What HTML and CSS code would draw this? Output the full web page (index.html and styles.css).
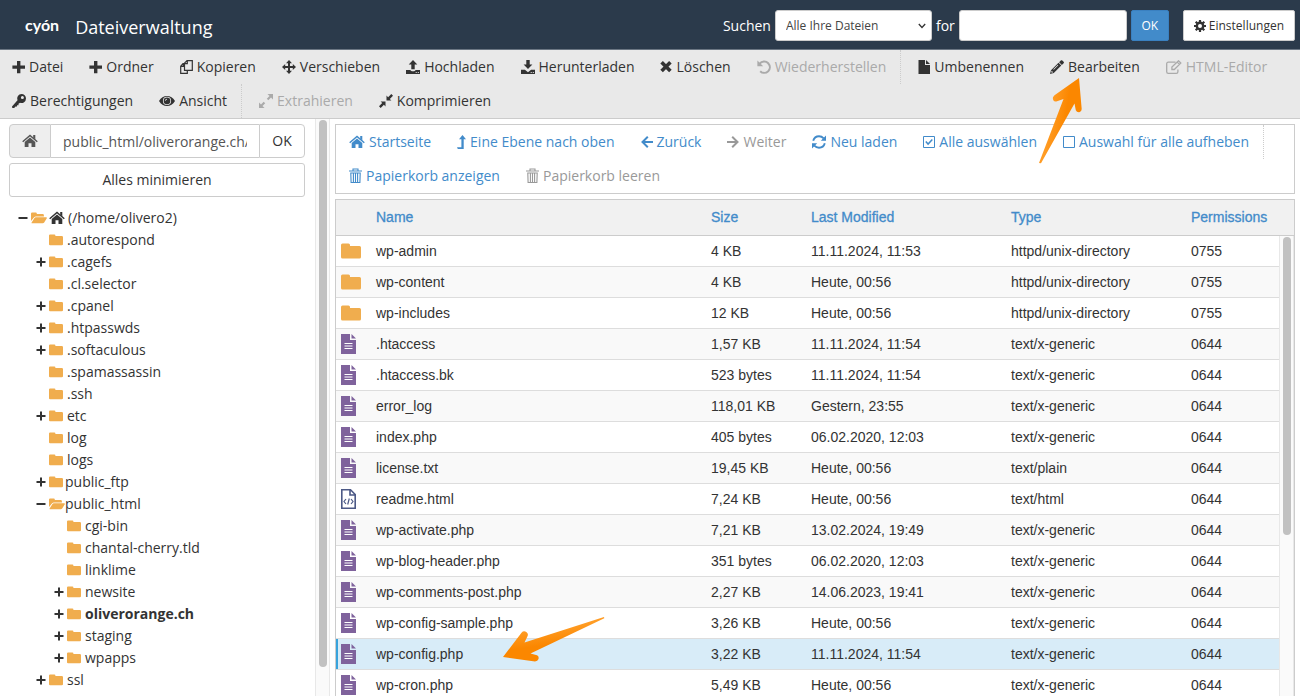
FILE: index.html
```html
<!DOCTYPE html>
<html lang="de">
<head>
<meta charset="utf-8">
<title>Dateiverwaltung</title>
<link rel="stylesheet" href="styles.css">
</head>
<body>
<svg class="sprite" aria-hidden="true">
  <symbol id="plus" viewBox="0 0 13 14"><path d="M5 1h3.400v4.400h4.600v3.300h-4.600v4.600h-3.400v-4.600h-4.600v-3.300h4.600z"/></symbol>
  <symbol id="copy" viewBox="0 0 13 14"><path fill="none" stroke="currentColor" stroke-width="1.200" d="M4.500 3.200L7 .7h5.300v9.600H4.500zM7.300 .7v2.900H4.500M4.300 3.700H3L.7 6.200v7.100h6.600v-3M3.300 3.700v2.700H.7"/></symbol>
  <symbol id="move" viewBox="0 0 14 14"><path d="M7 0l3 3.200H8v2.800h2.800V4L14 7l-3.200 3V8H8v2.800h2L7 14l-3-3.200h2V8H3.200v2L0 7l3.200-3v2H6V3.200H4z"/></symbol>
  <symbol id="upload" viewBox="0 0 14 14"><path d="M7 0l4.300 4.600H8.700v4.600H5.300V4.600H2.700zM0 10h4.300c.5 1 1.300 1.300 2.700 1.300S9.200 11 9.700 10H14v4H0z"/><path class="knock" d="M9.700 12h1v1h-1zM11.800 12h1v1h-1z"/></symbol>
  <symbol id="download" viewBox="0 0 14 14"><path d="M5.300 0h3.400v4.500h2.700L7 9 2.600 4.500h2.700zM0 9.800h3.900L7 12.200l3.100-2.400H14V14H0z"/><path class="knock" d="M9.700 12h1v1h-1zM11.800 12h1v1h-1z"/></symbol>
  <symbol id="cross" viewBox="0 0 12 14"><path fill="none" stroke="currentColor" stroke-width="3.600" d="M1.600 2.200l8.800 8.800M10.400 2.200L1.600 11"/></symbol>
  <symbol id="undo" viewBox="0 0 14 14"><path fill="none" stroke="currentColor" stroke-width="2" d="M2.400 3.800C5 .8 9 .8 11.200 3.200c2.200 2.500 2.200 5.800 0 8-2.200 2.100-5.700 2.200-8 0"/><path d="M.4 .5v5.800h5.800z"/></symbol>
  <symbol id="file" viewBox="0 0 12 14"><path d="M.5 0H7v4.900h5V14H.5zM8 0l4 4H8z"/></symbol>
  <symbol id="pencil" viewBox="0 0 14 14"><path d="M9.100 2.200l2.800 2.800 1.700-1.700c.5-.5.500-1 0-1.500L12.300.5c-.5-.5-1-.5-1.500 0zM8.500 2.800L1 10.200 0 14l3.800-1 7.500-7.400z"/><path class="knock" d="M1.700 10.800l1.500 1.500-1.300.4-.7-.7zM3.300 9.200l4.500-4.500.5.500-4.500 4.500z"/></symbol>
  <symbol id="edit" viewBox="0 0 16 14"><path fill="none" stroke="currentColor" stroke-width="1.300" d="M9.500 2.200H2.300Q.7 2.200.7 3.800v7.900q0 1.600 1.600 1.600h8q1.600 0 1.600-1.600V9.400M5.900 9.500V7.100L12.500.8l2.300 2.300-6.500 6.400zM11.200 2.100l2.300 2.300"/></symbol>
  <symbol id="key" viewBox="0 0 14 14"><path fill-rule="evenodd" d="M9.500 0A4.500 4.500 0 0 1 14 4.500 4.500 4.500 0 0 1 8 8.700L6.500 9.800v1.400H5v1.400H3.500L2.200 14H.3L0 12.500l5.500-6.300A4.500 4.500 0 0 1 9.500 0zm.9 2a1.500 1.500 0 1 0 0 3 1.500 1.500 0 0 0 0-3z"/></symbol>
  <symbol id="eye" viewBox="0 0 16 14"><path fill-rule="evenodd" d="M0 7c2-3.300 4.700-5 8-5s6 1.700 8 5c-2 3.300-4.700 5-8 5S2 10.300 0 7zm8-4.200a4.100 4.100 0 1 0 0 8.200 4.100 4.100 0 0 0 0-8.200z"/><circle cx="8" cy="6.900" r="3.300"/><path class="knock" d="M6 6.700Q6.200 5 8 4.800v.8Q6.900 5.800 6.800 6.700z"/></symbol>
  <symbol id="expand" viewBox="0 0 14 14"><path d="M8.500 0H14v5.500l-2-2-2.700 2.700-1.500-1.500L10.500 2zM0 8.500l2 2 2.700-2.700 1.500 1.500L3.500 12l2 2H0z"/></symbol>
  <symbol id="compress" viewBox="0 0 14 14"><path d="M7.500 1.600l1.600 1.600L12.300 0 14 1.700l-3.200 3.200 1.600 1.600H7.500zM1.600 7.500h4.900v4.900l-1.600-1.600L1.700 14 0 12.300l3.200-3.200z"/></symbol>
  <symbol id="gear" viewBox="0 0 12 12"><circle cx="6" cy="6" r="3.200" fill="none" stroke="currentColor" stroke-width="2.400"/><path fill="none" stroke="currentColor" stroke-width="2.200" d="M6 0v2.500M6 9.500V12M0 6h2.500M9.500 6H12M1.700 1.700l1.800 1.800M8.500 8.500l1.800 1.800M10.300 1.700L8.500 3.500M3.500 8.500l-1.800 1.800"/></symbol>
  <symbol id="home" viewBox="0 0 16 14"><path d="M8 3.500l5.300 4.600V13H9.500V9.200h-3V13H2.700V8.100z"/><path fill="none" stroke="currentColor" stroke-width="1.500" d="M.7 7.700L8 1.400l7.300 6.300"/><path d="M11.200 1h2.100v4.500l-2.100-1.800z"/></symbol>
  <symbol id="levelup" viewBox="0 0 9 14"><path d="M5.500 0L9 4.300H6.700V14H.8L0 12.200h4.400V4.300H2z"/></symbol>
  <symbol id="left" viewBox="0 0 12 14"><path fill="none" stroke="currentColor" stroke-width="2" d="M6.800 1.800L1.500 7l5.300 5.200M1.500 7H12"/></symbol>
  <symbol id="right" viewBox="0 0 12 14"><path fill="none" stroke="currentColor" stroke-width="2" d="M5.200 1.800L10.500 7l-5.300 5.200M10.500 7H0"/></symbol>
  <symbol id="refresh" viewBox="0 0 14 14"><path fill="none" stroke="currentColor" stroke-width="1.900" d="M1.200 5.800C2 3 4.200 1.300 7 1.300c1.900 0 3.300.6 4.700 2M12.800 8.200c-.8 2.800-3 4.500-5.800 4.500-1.900 0-3.300-.6-4.700-2"/><path d="M14 .5v5.200H8.800zM0 13.500V8.300h5.200z"/></symbol>
  <symbol id="checked" viewBox="0 0 12 14"><path fill="none" stroke="currentColor" stroke-width="1" d="M.5 1.500h11v11H.5z"/><path fill="none" stroke="currentColor" stroke-width="1.500" d="M2.800 6.600l2.300 2.500 4.200-4.500"/></symbol>
  <symbol id="square" viewBox="0 0 12 14"><path fill="none" stroke="currentColor" stroke-width="1" d="M.5 1.500h11v11H.5z"/></symbol>
  <symbol id="trash" viewBox="0 0 13 16"><path fill="none" stroke="currentColor" stroke-width="1.100" d="M0 3h13M4 3V1h5v2M1.800 5h9.400l-.3 9.500H2.100zM4.400 5v9M6.500 5v9M8.600 5v9"/></symbol>
  <symbol id="folder" viewBox="0 0 14 12"><path d="M0 1.600Q0 .5 1.100.5h4.300q1 0 1 1v.6h6.400q1.200 0 1.200 1.200v6.900q0 1.100-1.200 1.100H1.100Q0 11.300 0 10.200z"/></symbol>
  <symbol id="folder-open" viewBox="0 0 16 12"><path d="M0 9V1.600Q0 .5 1.100.5h3.700q1 0 1 1v.6h5.900q1.200 0 1.200 1.200v1.300H4.700Q3.300 4.700 2.500 5.900z"/><path d="M.5 10.800l2.800-4.500q.6-1 1.600-1H15q1.300 0 .8 1l-2.600 4.200q-.5.800-1.500.8H1.100q-.8 0-.6-.5z"/></symbol>
  <symbol id="t-plus" viewBox="0 0 10 12"><path d="M4 1.500h2V5h3.500v2H6v3.500H4V7H.5V5H4z"/></symbol>
  <symbol id="t-minus" viewBox="0 0 10 12"><path d="M.5 5h9v2h-9z"/></symbol>
  <symbol id="big-folder" viewBox="0 0 20 20"><path d="M0 4Q0 2.500 1.500 2.500h6Q9 2.500 9 4v1h9.500Q20 5 20 6.500v9.500q0 1.500-1.500 1.500h-17Q0 17.500 0 16z"/></symbol>
  <symbol id="doc" viewBox="0 0 15 20"><path d="M0 0h9v6h6v14H0z"/><path d="M10.500 0v4.500H15z"/><path fill="none" stroke="#fff" d="M3.500 9.500h8M3.500 12h8M3.500 14.500h8"/></symbol>
  <symbol id="code" viewBox="0 0 15 20"><path fill="none" stroke="currentColor" stroke-width="1.600" d="M.8.800h8.700l4.700 4.700v13.700H.8zM9 .8v5.200h5.200"/><path fill="none" stroke="currentColor" stroke-width="1.200" d="M5 10l-2 2.500L5 15M10 10l2 2.500-2 2.500M8.300 9.500l-1.600 6"/></symbol>
</svg>

<header class="topbar">
  <div class="logo">cyón</div>
  <h1>Dateiverwaltung</h1>
  <form class="search">
    <label for="scope">Suchen</label>
    <div class="select"><select id="scope"><option>Alle Ihre Dateien</option></select><svg viewBox="0 0 8 6"><path d="M.8 1L4 4.500 7.200 1"/></svg></div>
    <label for="query">for</label>
    <input id="query" type="text">
    <button class="go" type="button">OK</button>
    <button class="settings" type="button"><svg class="i12 gear"><use href="#gear"/></svg>Einstellungen</button>
  </form>
</header>

<nav class="toolbar">
  <button><svg class="i13"><use href="#plus"/></svg>Datei</button>
  <button><svg class="i13"><use href="#plus"/></svg>Ordner</button>
  <button><svg class="i13"><use href="#copy"/></svg>Kopieren</button>
  <button><svg class="i14"><use href="#move"/></svg>Verschieben</button>
  <button><svg class="i14"><use href="#upload"/></svg>Hochladen</button>
  <button><svg class="i14"><use href="#download"/></svg>Herunterladen</button>
  <button><svg class="i12"><use href="#cross"/></svg>Löschen</button>
  <button disabled><svg class="i14"><use href="#undo"/></svg>Wiederherstellen</button>
  <span class="sep"></span>
  <button><svg class="i12"><use href="#file"/></svg>Umbenennen</button>
  <button><svg class="i14"><use href="#pencil"/></svg>Bearbeiten</button>
  <button disabled><svg class="i16"><use href="#edit"/></svg>HTML-Editor</button>
  <button><svg class="i14"><use href="#key"/></svg>Berechtigungen</button>
  <button><svg class="i16"><use href="#eye"/></svg>Ansicht</button>
  <span class="sep"></span>
  <button disabled><svg class="i14"><use href="#expand"/></svg>Extrahieren</button>
  <button><svg class="i14"><use href="#compress"/></svg>Komprimieren</button>
</nav>

<div class="workspace">
  <aside class="sidebar">
    <form class="path">
      <button class="root" type="button" aria-label="Home"><svg class="i16"><use href="#home"/></svg></button>
      <input type="text" aria-label="Pfad" value="public_html/oliverorange.ch/">
      <button class="ok" type="button">OK</button>
    </form>
    <button class="collapse" type="button">Alles minimieren</button>
    <ul class="tree">
      <li><svg class="tg"><use href="#t-minus"/></svg><svg class="fo"><use href="#folder-open"/></svg><svg class="i16 hm"><use href="#home"/></svg>(/home/olivero2)
        <ul>
          <li><i class="tg"></i><svg class="f"><use href="#folder"/></svg>.autorespond</li>
          <li><svg class="tg"><use href="#t-plus"/></svg><svg class="f"><use href="#folder"/></svg>.cagefs</li>
          <li><i class="tg"></i><svg class="f"><use href="#folder"/></svg>.cl.selector</li>
          <li><svg class="tg"><use href="#t-plus"/></svg><svg class="f"><use href="#folder"/></svg>.cpanel</li>
          <li><svg class="tg"><use href="#t-plus"/></svg><svg class="f"><use href="#folder"/></svg>.htpasswds</li>
          <li><svg class="tg"><use href="#t-plus"/></svg><svg class="f"><use href="#folder"/></svg>.softaculous</li>
          <li><i class="tg"></i><svg class="f"><use href="#folder"/></svg>.spamassassin</li>
          <li><i class="tg"></i><svg class="f"><use href="#folder"/></svg>.ssh</li>
          <li><svg class="tg"><use href="#t-plus"/></svg><svg class="f"><use href="#folder"/></svg>etc</li>
          <li><i class="tg"></i><svg class="f"><use href="#folder"/></svg>log</li>
          <li><i class="tg"></i><svg class="f"><use href="#folder"/></svg>logs</li>
          <li><svg class="tg"><use href="#t-plus"/></svg><svg class="f tight"><use href="#folder"/></svg>public_ftp</li>
          <li><svg class="tg"><use href="#t-minus"/></svg><svg class="fo"><use href="#folder-open"/></svg>public_html
            <ul>
              <li><i class="tg"></i><svg class="f"><use href="#folder"/></svg>cgi-bin</li>
              <li><i class="tg"></i><svg class="f"><use href="#folder"/></svg>chantal-cherry.tld</li>
              <li><i class="tg"></i><svg class="f"><use href="#folder"/></svg>linklime</li>
              <li><svg class="tg"><use href="#t-plus"/></svg><svg class="f"><use href="#folder"/></svg>newsite</li>
              <li><svg class="tg"><use href="#t-plus"/></svg><svg class="f"><use href="#folder"/></svg><b>oliverorange.ch</b></li>
              <li><svg class="tg"><use href="#t-plus"/></svg><svg class="f"><use href="#folder"/></svg>staging</li>
              <li><svg class="tg"><use href="#t-plus"/></svg><svg class="f"><use href="#folder"/></svg>wpapps</li>
            </ul>
          </li>
          <li><svg class="tg"><use href="#t-plus"/></svg><svg class="f"><use href="#folder"/></svg>ssl</li>
        </ul>
      </li>
    </ul>
  </aside>
  <div class="track side-track"><div class="thumb side-thumb"></div></div>

  <main>
    <nav class="actions">
      <a href="#"><svg class="i16"><use href="#home"/></svg>Startseite</a>
      <a href="#"><svg class="i9"><use href="#levelup"/></svg>Eine Ebene nach oben</a>
      <a href="#"><svg class="i12"><use href="#left"/></svg>Zurück</a>
      <a class="off" href="#"><svg class="i12"><use href="#right"/></svg>Weiter</a>
      <a href="#"><svg class="i14"><use href="#refresh"/></svg>Neu laden</a>
      <a href="#"><svg class="i12"><use href="#checked"/></svg>Alle auswählen</a>
      <a href="#"><svg class="i12"><use href="#square"/></svg>Auswahl für alle aufheben</a>
      <span class="sep"></span>
      <a href="#"><svg class="i13 trash"><use href="#trash"/></svg>Papierkorb anzeigen</a>
      <a class="off" href="#"><svg class="i13 trash"><use href="#trash"/></svg>Papierkorb leeren</a>
    </nav>
    <div class="listing">
      <table>
        <colgroup><col class="c-icon"><col><col class="c-size"><col class="c-date"><col class="c-type"><col class="c-perm"></colgroup>
        <thead><tr><th></th><th>Name</th><th>Size</th><th>Last Modified</th><th>Type</th><th>Permissions</th></tr></thead>
        <tbody>
          <tr><td><svg class="dir"><use href="#big-folder"/></svg></td><td>wp-admin</td><td>4 KB</td><td>11.11.2024, 11:53</td><td>httpd/unix-directory</td><td>0755</td></tr>
          <tr><td><svg class="dir"><use href="#big-folder"/></svg></td><td>wp-content</td><td>4 KB</td><td>Heute, 00:56</td><td>httpd/unix-directory</td><td>0755</td></tr>
          <tr><td><svg class="dir"><use href="#big-folder"/></svg></td><td>wp-includes</td><td>12 KB</td><td>Heute, 00:56</td><td>httpd/unix-directory</td><td>0755</td></tr>
          <tr><td><svg class="doc"><use href="#doc"/></svg></td><td>.htaccess</td><td>1,57 KB</td><td>11.11.2024, 11:54</td><td>text/x-generic</td><td>0644</td></tr>
          <tr><td><svg class="doc"><use href="#doc"/></svg></td><td>.htaccess.bk</td><td>523 bytes</td><td>11.11.2024, 11:54</td><td>text/x-generic</td><td>0644</td></tr>
          <tr><td><svg class="doc"><use href="#doc"/></svg></td><td>error_log</td><td>118,01 KB</td><td>Gestern, 23:55</td><td>text/x-generic</td><td>0644</td></tr>
          <tr><td><svg class="doc"><use href="#doc"/></svg></td><td>index.php</td><td>405 bytes</td><td>06.02.2020, 12:03</td><td>text/x-generic</td><td>0644</td></tr>
          <tr><td><svg class="doc"><use href="#doc"/></svg></td><td>license.txt</td><td>19,45 KB</td><td>Heute, 00:56</td><td>text/plain</td><td>0644</td></tr>
          <tr><td><svg class="doc html"><use href="#code"/></svg></td><td>readme.html</td><td>7,24 KB</td><td>Heute, 00:56</td><td>text/html</td><td>0644</td></tr>
          <tr><td><svg class="doc"><use href="#doc"/></svg></td><td>wp-activate.php</td><td>7,21 KB</td><td>13.02.2024, 19:49</td><td>text/x-generic</td><td>0644</td></tr>
          <tr><td><svg class="doc"><use href="#doc"/></svg></td><td>wp-blog-header.php</td><td>351 bytes</td><td>06.02.2020, 12:03</td><td>text/x-generic</td><td>0644</td></tr>
          <tr><td><svg class="doc"><use href="#doc"/></svg></td><td>wp-comments-post.php</td><td>2,27 KB</td><td>14.06.2023, 19:41</td><td>text/x-generic</td><td>0644</td></tr>
          <tr><td><svg class="doc"><use href="#doc"/></svg></td><td>wp-config-sample.php</td><td>3,26 KB</td><td>Heute, 00:56</td><td>text/x-generic</td><td>0644</td></tr>
          <tr class="selected"><td><svg class="doc"><use href="#doc"/></svg></td><td>wp-config.php</td><td>3,22 KB</td><td>11.11.2024, 11:54</td><td>text/x-generic</td><td>0644</td></tr>
          <tr><td><svg class="doc"><use href="#doc"/></svg></td><td>wp-cron.php</td><td>5,49 KB</td><td>Heute, 00:56</td><td>text/x-generic</td><td>0644</td></tr>
        </tbody>
      </table>
      <div class="listing-scroll"><div class="track list-track"><div class="thumb list-thumb"></div></div></div>
    </div>
  </main>
</div>

<svg class="pointer pointer-edit" viewBox="0 0 46 88"><defs><linearGradient id="g1" x1="0" y1="0" x2="1" y2=".3"><stop offset=".35" stop-color="#ff9c24"/><stop offset=".7" stop-color="#fb8700"/></linearGradient></defs><path fill="url(#g1)" d="M41 2L16.500 19.300Q14 21.500 15.300 24.200 16.500 26 19 25.200L25.500 23 1 87l2 .2L36.500 27.500l1.300 6.700q1 2.300 3.500 2 2.500-.7 2.400-3.200z"/></svg>
<svg class="pointer pointer-row" viewBox="0 0 104 48"><defs><linearGradient id="g2" x1="0" y1="0" x2=".3" y2="1"><stop offset=".35" stop-color="#ff9c24"/><stop offset=".7" stop-color="#fb8700"/></linearGradient></defs><path fill="url(#g2)" d="M2 41L20.500 16.800Q22.500 14.400 25.300 15.900 27.600 17.500 26.600 20L23.500 26.500 103 1l.3 1.200L29.500 37.500l6.500 1.700q2.200 1.200 1.500 3.800-.8 2.400-3.500 2.400z"/></svg>
</body>
</html>
```
FILE: styles.css
```css
* { box-sizing: border-box; }
body {
  margin: 0;
  height: 100vh;
  display: flex;
  flex-direction: column;
  overflow: hidden;
  background: #fff;
  color: #333;
  font: 14px/20px "Open Sans", sans-serif;
}
button, input, select { font: inherit; color: inherit; margin: 0; }
button { cursor: pointer; }
svg { display: block; flex: none; fill: currentColor; overflow: visible; }
.sprite { position: absolute; width: 0; height: 0; }
.knock { fill: #e9e9e9; }

.i9 { width: 9px; height: 14px; }
.i12 { width: 12px; height: 14px; }
.i13 { width: 13px; height: 14px; }
.i14 { width: 14px; height: 14px; }
.i16 { width: 16px; height: 14px; }

.topbar {
  flex: none;
  display: flex;
  align-items: center;
  height: 50px;
  padding: 0 5px 0 25px;
  background: #2b3a4b;
  border-bottom: 1px solid #6b7683;
  color: #fff;
}
.logo { font: 700 16px/20px Lato, sans-serif; }
h1 { margin: 4px 0 0 16px; font-size: 18px; font-weight: 400; line-height: 24px; }
.search { display: flex; align-items: center; gap: 4px; margin-left: auto; padding-top: 2px; }
.select { position: relative; width: 157px; color: #444; }
.select select {
  appearance: none;
  width: 100%;
  height: 31px;
  padding: 0 10px;
  border: 1px solid #ccc;
  border-radius: 3px;
  background: #fff;
  font-size: 12px;
}
.select svg { position: absolute; right: 6px; top: 13px; width: 8px; height: 6px; fill: none; stroke: #333; stroke-width: 1.3; }
.search input { width: 168px; height: 31px; border: 1px solid #ccc; border-radius: 3px; background: #fff; color: #444; }
.go, .settings { height: 31px; border-radius: 2px; font-size: 12px; }
.go { width: 38px; padding: 0; border: 1px solid #3a80c0; background: #428bca; color: #fff; }
.settings { display: flex; align-items: center; gap: 3px; margin-left: 10px; padding: 0 10px; border: 1px solid #ccc; background: #fff; color: #333; }
.gear { height: 12px; }

.toolbar, .actions { flex: none; display: flex; flex-wrap: wrap; }
.toolbar { padding: 0 0 0 12px; background: #e9e9e9; border-bottom: 1px solid #ccc; }
.toolbar button, .actions a {
  display: flex;
  align-items: center;
  gap: 4px;
  height: 34px;
  margin-right: 26px;
  padding: 0;
  border: 0;
  background: none;
  text-decoration: none;
}
.toolbar button:disabled { color: #aaa; }
.sep { height: 34px; margin: 0 17px 0 -12px; border-left: 1px dotted #ccc; }

.workspace { flex: 1; display: flex; min-height: 0; }
.sidebar { flex: none; width: 315px; padding: 5px 10px 0 9px; overflow: hidden; }
.path { display: flex; height: 34px; }
.path > * { border: 1px solid #ccc; background: #fff; }
.path .root { display: flex; align-items: center; justify-content: center; width: 42px; padding: 0; border-radius: 4px 0 0 4px; background: #eee; color: #555; }
.path input { flex: 1; min-width: 0; padding: 0 12px; border-width: 1px 0; color: #555; }
.path .ok { width: 46px; padding: 0; border-radius: 0 4px 4px 0; }
.path .root, .path .ok, .path input { height: 34px; }
.collapse { width: 100%; height: 34px; margin-top: 5px; border: 1px solid #ccc; border-radius: 3px; background: #fff; }
.tree { margin: 10px 0 0; padding: 0 0 0 9px; list-style: none; line-height: 22px; white-space: nowrap; }
.tree ul { margin: 0; padding: 0 0 0 18px; list-style: none; }
.tree svg, .tree i { display: inline-block; vertical-align: -1px; }
.tree .tg { width: 10px; height: 12px; margin-right: 3px; }
.tree .f { width: 14px; height: 12px; margin-right: 4px; color: #f0ad4e; }
.tree .tight { margin-right: 2px; }
.tree .fo { width: 16px; height: 12px; color: #f0ad4e; }
.tree .hm { margin: 0 3px 0 2px; vertical-align: -2px; }
.track { background: #fafafa; border: solid #e8e8e8; border-width: 0 1px; }
.thumb { width: 8px; margin: 0 auto; border-radius: 4px; background: #c1c1c1; }
.side-track { flex: none; width: 15px; padding-top: 1px; }
.side-thumb { height: 95%; }

main { flex: 1; min-width: 0; display: flex; flex-direction: column; gap: 5px; padding: 5px 5px 0 5px; }
.actions { padding: 0 0 0 13px; border: 1px solid #ccc; }
.actions a { color: #428bca; }
.actions .off { color: #999; }
.actions .sep { margin-right: 0; }
.trash { height: 16px; }
.listing { flex: 1; display: flex; min-height: 0; overflow: hidden; border: 1px solid #ccc; border-bottom: 0; font-family: "Liberation Sans", Arial, sans-serif; }
table { flex: 1; align-self: flex-start; min-width: 0; table-layout: fixed; border-collapse: collapse; }
.c-icon { width: 35px; }
.c-size { width: 100px; }
.c-date { width: 200px; }
.c-type { width: 180px; }
.c-perm { width: 93px; }
th, td { padding: 0 5px; text-align: left; white-space: nowrap; }
th { height: 35px; background: #f1f1f1; border-bottom: 1px solid #ccc; color: #428bca; font-weight: 400; -webkit-text-stroke: 0.300px; }
td { height: 31px; border-bottom: 1px solid #ddd; }
tbody tr:nth-child(even) { background: #f9f9f9; }
tbody tr.selected { background: #d8ecf8; box-shadow: inset 2px 0 #38a3dc; }
.dir { width: 20px; height: 20px; color: #f0ad4e; }
.doc { width: 15px; height: 20px; color: #7f629c; }
.html { color: #4c5986; }
.listing-scroll { flex: none; width: 15px; display: flex; flex-direction: column; }
.listing-scroll::before { content: ""; flex: none; height: 35px; background: #f1f1f1; border-bottom: 1px solid #ccc; }
.list-track { flex: 1; padding-top: 1px; }
.list-thumb { height: 65%; }

.pointer { position: absolute; }
.pointer-edit { left: 1038px; top: 76px; width: 46px; height: 88px; }
.pointer-row { left: 501px; top: 616px; width: 104px; height: 48px; }
```
